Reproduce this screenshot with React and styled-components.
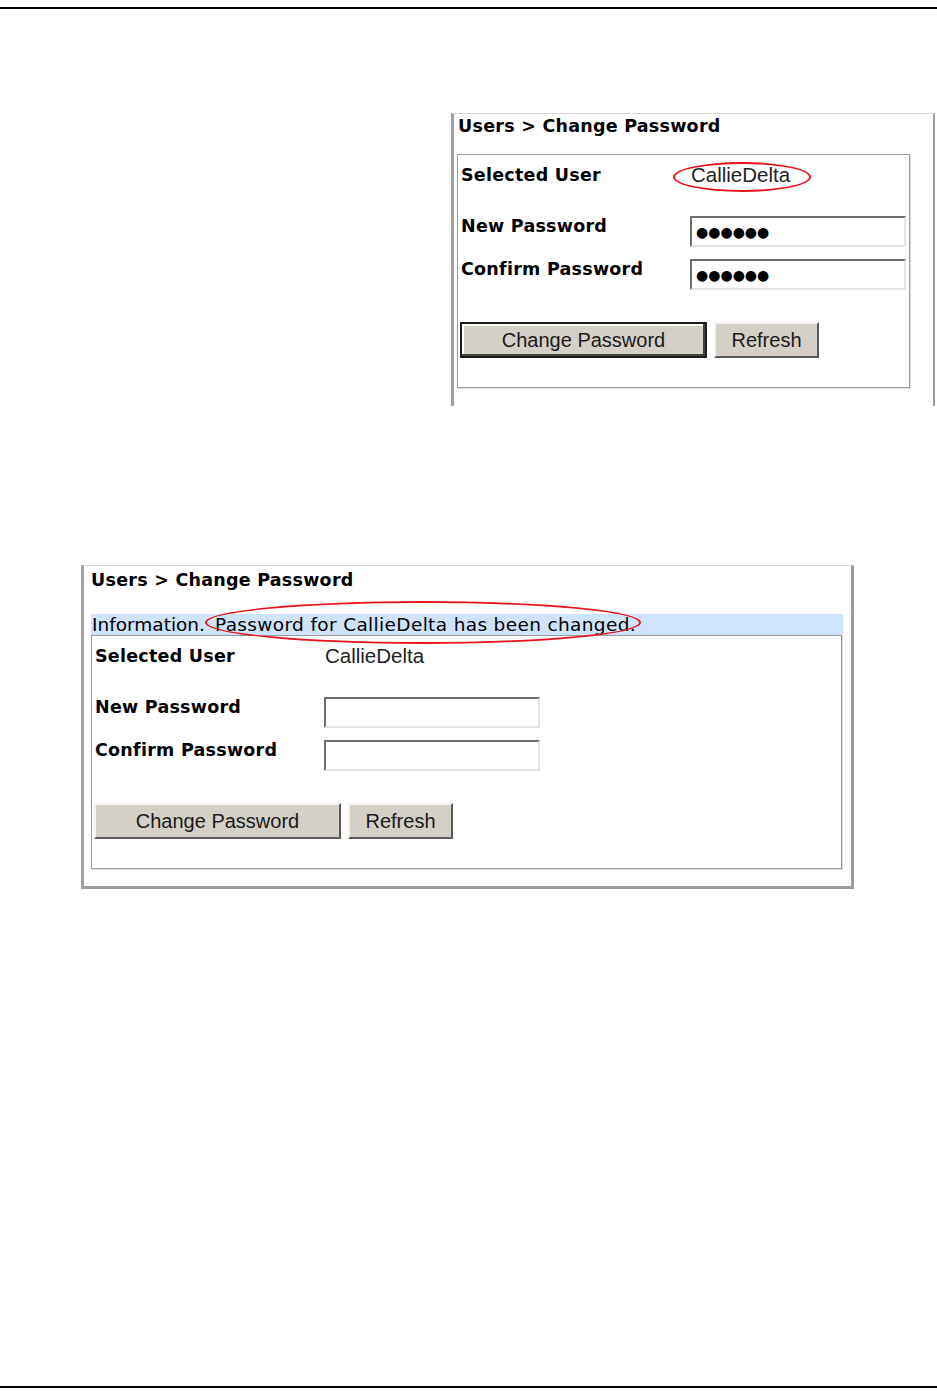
import React from 'react';
import styled, { createGlobalStyle } from 'styled-components';

const GlobalStyle = createGlobalStyle`
  body {
    margin: 0;
    background: #fff;
    font-family: 'DejaVu Sans', Verdana, sans-serif;
    color: #000;
  }
`;

const Page = styled.div`
  display: flex;
  flex-direction: column;
  align-items: flex-start;
  min-height: 1394px;
  box-sizing: border-box;
`;

const Rule = styled.div`
  align-self: stretch;
  height: 2px;
  background: #000;
  margin-top: ${p => (p.bottom ? 'auto' : '7px')};
  margin-bottom: ${p => (p.bottom ? '6px' : '0')};
`;

const Panel = styled.div`
  box-sizing: border-box;
  width: ${p => p.width}px;
  margin-top: ${p => p.top}px;
  margin-left: ${p => p.left}px;
  border-top: 1px solid #d8d8d8;
  border-left: 3px solid #a0a0a0;
  border-right: ${p => (p.closed ? '3px' : '2px')} solid #9c9c9c;
  border-bottom: ${p => (p.closed ? '3px solid #9c9c9c' : 'none')};
  padding: 0 0 ${p => p.bottomPad}px ${p => p.padLeft}px;
`;

const Title = styled.div`
  font-weight: bold;
  font-size: 17.5px;
  letter-spacing: 0.25px;
  line-height: 20px;
  padding-top: ${p => p.padTop}px;
  padding-left: ${p => p.indent}px;
  white-space: nowrap;
`;

const InfoBar = styled.div`
  display: flex;
  align-items: center;
  width: 752px;
  height: 21px;
  margin-top: 24px;
  background: #cfe3fc;
  font-size: 18.5px;
  line-height: 21px;
  white-space: nowrap;
`;

const InfoLabel = styled.span`
  padding-left: 1px;
`;

const Message = styled.span`
  letter-spacing: 0.35px;
`;

const Circled = styled.span`
  position: relative;
  display: inline-block;
  margin-left: ${p => p.gap || 0}px;

  &::after {
    content: '';
    position: absolute;
    left: ${p => p.l}px;
    right: ${p => p.r}px;
    top: ${p => p.t}px;
    bottom: ${p => p.b}px;
    border: 2px solid #e8141b;
    border-radius: 50%;
    pointer-events: none;
  }
`;

const FormBox = styled.div`
  box-sizing: border-box;
  width: ${p => p.width}px;
  height: 234px;
  margin-top: ${p => p.gap}px;
  margin-left: ${p => p.shift}px;
  border: 1px solid #9a9a9a;
  box-shadow: 1px 1px 0 #dcdcdc;
  padding: 10px 3px 0 3px;
`;

const FieldRow = styled.div`
  display: grid;
  grid-template-columns: 229px 1fr;
  align-items: start;
  margin-top: ${p => p.gap}px;
`;

const Label = styled.div`
  font-weight: bold;
  font-size: 17.5px;
  letter-spacing: 0.25px;
  line-height: 20px;
  white-space: nowrap;
`;

const Value = styled.div`
  font-family: 'Liberation Sans', Arial, sans-serif;
  font-size: 20.5px;
  line-height: 20px;
  color: #222;
  padding-left: 1px;
`;

const PasswordInput = styled.input`
  box-sizing: border-box;
  width: 216px;
  height: 31px;
  margin: 0;
  padding: 0 0 0 4px;
  border-top: 2px solid #6e6e6e;
  border-left: 2px solid #6e6e6e;
  border-bottom: 2px solid #e6e4de;
  border-right: 2px solid #e6e4de;
  background: #fff;
  font-family: 'DejaVu Sans', sans-serif;
  font-size: 14px;
  color: #000;
  outline: none;
`;

const ButtonRow = styled.div`
  display: flex;
  gap: 7px;
  margin-top: 32px;
  margin-left: -1px;
`;

const Button = styled.button`
  box-sizing: border-box;
  width: ${p => p.width}px;
  height: 36px;
  margin: 0;
  padding: 0;
  background: #d4d0c8;
  font-family: 'Liberation Sans', Arial, sans-serif;
  font-size: 20px;
  color: #1a1a1a;
  border-top: 2px solid #f4f3ef;
  border-left: 2px solid #f4f3ef;
  border-bottom: 2px solid #5a5a5a;
  border-right: 2px solid #5a5a5a;
  outline: ${p => (p.primary ? '2px solid #1c1c1c' : 'none')};
  outline-offset: -2px;
  box-shadow: ${p => (p.primary ? 'inset -2px -2px 0 #404040, inset 2px 2px 0 #fff' : 'none')};
`;

const PasswordForm = ({ width, gap, shift, filled, primary, userEllipse }) => (
  <FormBox width={width} gap={gap} shift={shift}>
    <FieldRow gap={0}>
      <Label>Selected User</Label>
      <Value>
        {userEllipse ? (
          <Circled l={-18} r={-21} t={-3} b={-7}>CallieDelta</Circled>
        ) : (
          'CallieDelta'
        )}
      </Value>
    </FieldRow>
    <FieldRow gap={31}>
      <Label>New Password</Label>
      <PasswordInput readOnly value={filled ? '●●●●●●' : ''} />
    </FieldRow>
    <FieldRow gap={12}>
      <Label>Confirm Password</Label>
      <PasswordInput readOnly value={filled ? '●●●●●●' : ''} />
    </FieldRow>
    <ButtonRow>
      <Button width={247} primary={primary}>Change Password</Button>
      <Button width={105}>Refresh</Button>
    </ButtonRow>
  </FormBox>
);

export default function App() {
  return (
    <>
      <GlobalStyle />
      <Page>
        <Rule />
        <Panel width={484} top={104} left={451} padLeft={0} bottomPad={18}>
          <Title padTop={2} indent={4}>Users &gt; Change Password</Title>
          <PasswordForm width={453} gap={18} shift={3} filled primary userEllipse />
        </Panel>
        <Panel width={773} top={159} left={81} padLeft={7} bottomPad={17} closed>
          <Title padTop={4} indent={0}>Users &gt; Change Password</Title>
          <InfoBar>
            <InfoLabel>Information.</InfoLabel>
            <Circled gap={10} l={-10} r={-5} t={-13} b={-9}>
              <Message>Password for CallieDelta has been changed.</Message>
            </Circled>
          </InfoBar>
          <PasswordForm width={751} gap={0} shift={0} />
        </Panel>
        <Rule bottom />
      </Page>
    </>
  );
}
